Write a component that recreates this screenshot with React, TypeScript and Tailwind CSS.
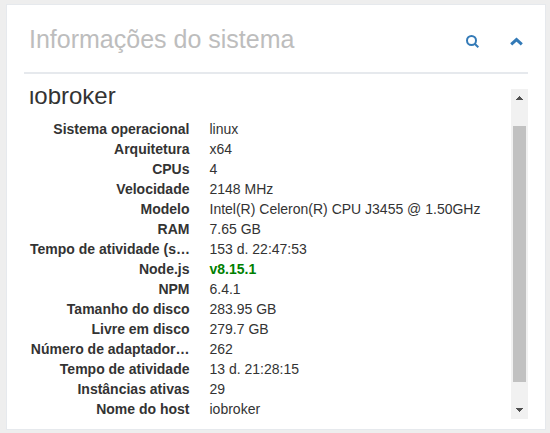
const rows: [string, string][] = [
  ['Sistema operacional', 'linux'],
  ['Arquitetura', 'x64'],
  ['CPUs', '4'],
  ['Velocidade', '2148 MHz'],
  ['Modelo', 'Intel(R) Celeron(R) CPU J3455 @ 1.50GHz'],
  ['RAM', '7.65 GB'],
  ['Tempo de atividade (s…', '153 d. 22:47:53'],
  ['Node.js', 'v8.15.1'],
  ['NPM', '6.4.1'],
  ['Tamanho do disco', '283.95 GB'],
  ['Livre em disco', '279.7 GB'],
  ['Número de adaptador…', '262'],
  ['Tempo de atividade', '13 d. 21:28:15'],
  ['Instâncias ativas', '29'],
  ['Nome do host', 'iobroker'],
];

function ScrollBar() {
  return (
    <div className="flex w-[17px] shrink-0 flex-col items-center bg-[#f1f1f1]">
      <svg className="h-[17px] w-[17px] shrink-0" viewBox="0 0 17 17" fill="#505050" shapeRendering="crispEdges">
        <path d="M8 7h1v1h1v1h1v1h1v1H5v-1h1V9h1V8h1z" />
      </svg>
      <div className="mt-5 h-64 w-[13px] bg-[#c1c1c1]" />
      <svg className="mt-auto h-[17px] w-[17px] shrink-0" viewBox="0 0 17 17" fill="#505050" shapeRendering="crispEdges">
        <path d="M5 6h7v1h-1v1h-1v1H9v1H8V9H7V8H6V7H5z" />
      </svg>
    </div>
  );
}

export default function App() {
  return (
    <div className="h-[433px] w-[550px] overflow-hidden bg-[#eeeeee] pt-1 pl-1.5 font-['Liberation_Sans',Arial,sans-serif] text-sm leading-5 text-[#333333]">
      <section className="h-[426px] w-[540px] border border-[#e6e9ed] bg-white px-[17px]">
        <header className="flex h-[69px] items-center border-b-2 border-[#e6e9ed] pl-[5px]">
          <h2 className="mt-px flex-1 text-[25px] leading-7 whitespace-nowrap text-[#bdbdbd]">Informações do sistema</h2>
          <svg className="mt-1.5 mr-[31px] h-[13px] w-[13px]" viewBox="0 0 13 13" fill="none" stroke="#337ab7" strokeWidth="2">
            <circle cx="5.5" cy="5.5" r="4.5" />
            <path d="M8.7 8.7l3.6 3.6" />
          </svg>
          <svg className="mt-1.5 mr-[5px] h-[9px] w-[13px]" viewBox="0 0 13 9" fill="none" stroke="#337ab7" strokeWidth="3">
            <path d="M1.2 7.4l5.3-4.8 5.3 4.8" />
          </svg>
        </header>
        <div className="mt-[15px] flex h-[330px]">
          <div className="min-w-0 flex-1 overflow-hidden pl-[5px]">
            <h1 className="-mt-[7px] h-[37px] text-2xl leading-7">iobroker</h1>
            <dl className="pl-px">
              {rows.map(([label, value]) => (
                <div key={label} className="flex h-5">
                  <dt className="w-[159.5px] text-right font-bold whitespace-nowrap">{label}</dt>
                  <dd className={value === 'v8.15.1' ? 'ml-5 font-bold text-[#008000]' : 'ml-5'}>{value}</dd>
                </div>
              ))}
            </dl>
          </div>
          <ScrollBar />
        </div>
      </section>
    </div>
  );
}
